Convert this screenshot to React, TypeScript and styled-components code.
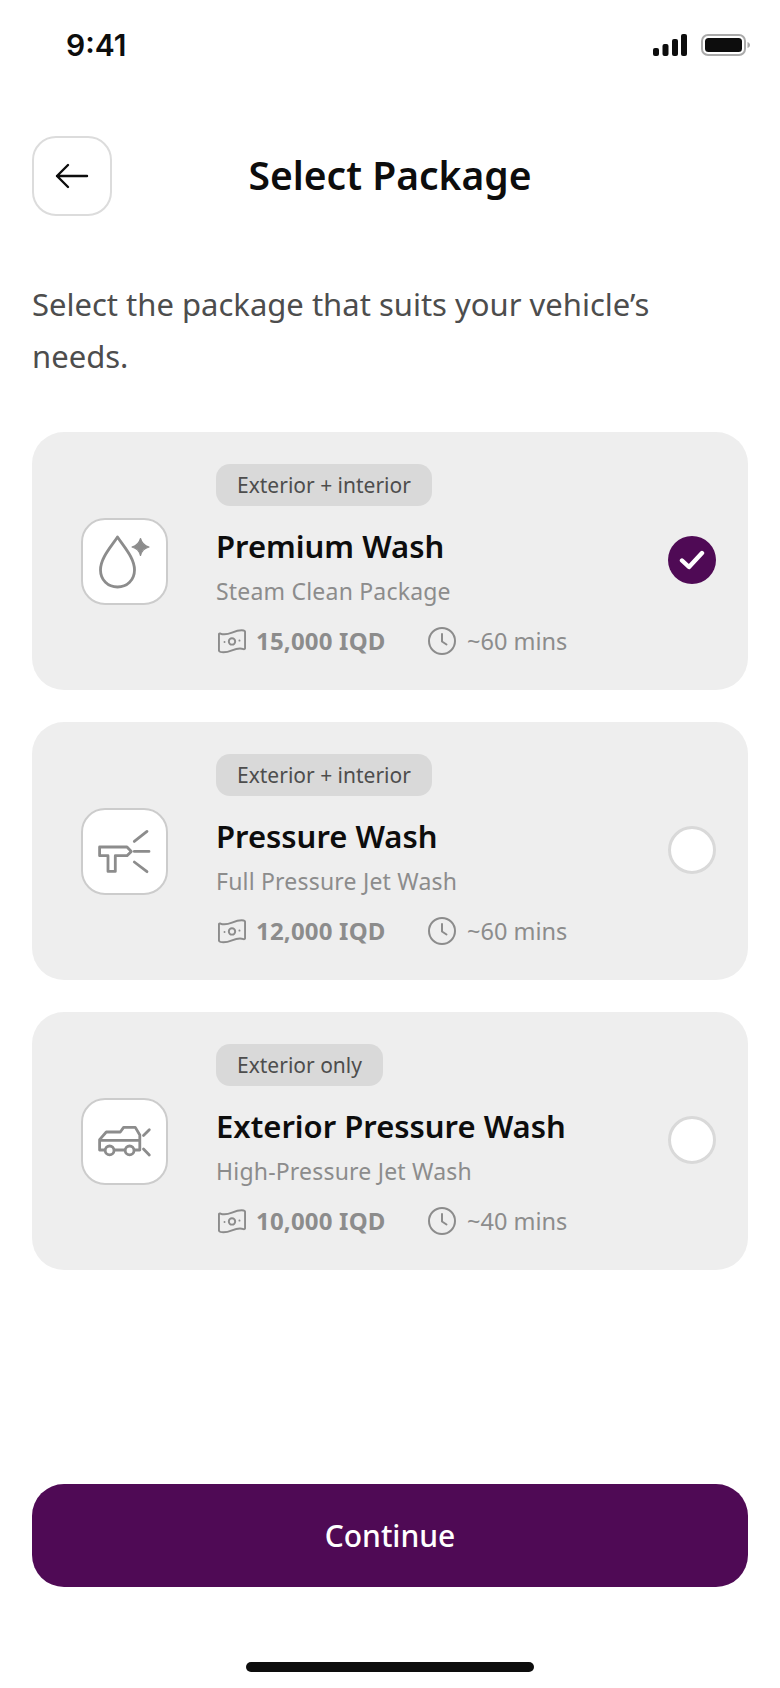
import React from 'react';
import styled, { createGlobalStyle } from 'styled-components';

const GlobalStyle = createGlobalStyle`
  html, body {
    margin: 0;
    padding: 0;
    background: #fff;
  }
  * {
    box-sizing: border-box;
  }
`;

const Page = styled.div`
  width: 780px;
  height: 1688px;
  display: flex;
  flex-direction: column;
  background: #fff;
  font-family: 'Noto Sans', 'Liberation Sans', sans-serif;
  overflow: hidden;
`;

const StatusBar = styled.div`
  height: 90px;
  padding: 0 30px 0 66px;
  display: flex;
  align-items: center;
  justify-content: space-between;
`;

const Time = styled.span`
  font-family: Inter, sans-serif;
  font-size: 30px;
  font-weight: 600;
  color: #0d0d0d;
`;

const StatusIcons = styled.div`
  display: flex;
  align-items: center;
  gap: 14px;
`;

const Header = styled.div`
  margin-top: 46px;
  padding: 0 32px;
  display: flex;
  align-items: center;
`;

const BackButton = styled.button`
  width: 80px;
  height: 80px;
  flex: none;
  display: flex;
  align-items: center;
  justify-content: center;
  padding: 0;
  background: #fff;
  border: 2px solid #dcdcdc;
  border-radius: 24px;
`;

const Title = styled.h1`
  flex: 1;
  margin: 0 80px 2px 0;
  text-align: center;
  font-size: 39px;
  font-weight: 600;
  line-height: 48px;
  color: #0d0d0d;
`;

const Intro = styled.p`
  margin: 62px 0 0;
  padding: 0 32px;
  font-size: 31px;
  line-height: 52px;
  color: #4d4d4d;
`;

const CardList = styled.div`
  margin-top: 50px;
  padding: 0 32px;
  display: flex;
  flex-direction: column;
  gap: 32px;
`;

const Card = styled.div`
  height: 258px;
  padding: 32px 32px 0 49px;
  display: flex;
  align-items: flex-start;
  background: #eeeeee;
  border-radius: 32px;
`;

const IconTile = styled.div`
  width: 87px;
  height: 87px;
  flex: none;
  margin: 54px 48px 0 0;
  background: #fff;
  border: 2px solid #cccccc;
  border-radius: 24px;
`;

const CardBody = styled.div`
  flex: 1;
  min-width: 0;
`;

const Pill = styled.span`
  display: inline-flex;
  align-items: center;
  height: 42px;
  padding: 0 21px;
  background: #d9d9d9;
  border-radius: 14px;
  font-size: 21px;
  color: #4d4d4d;
`;

const CardTitle = styled.div`
  margin-top: 18px;
  font-size: 31px;
  line-height: 44px;
  font-weight: 600;
  color: #0d0d0d;
`;

const CardSubtitle = styled.div`
  margin-top: 6px;
  font-size: 23px;
  line-height: 34px;
  letter-spacing: 0.2px;
  color: #8c8c8c;
`;

const MetaRow = styled.div`
  margin-top: 17px;
  display: flex;
  align-items: center;
  font-size: 24px;
  line-height: 32px;
  color: #8c8c8c;
`;

const Meta = styled.span<{ $width?: number }>`
  display: flex;
  align-items: center;
  gap: 10px;
  width: ${({ $width }) => ($width ? `${$width}px` : 'auto')};
`;

const Price = styled.b`
  font-weight: 700;
  letter-spacing: 0.2px;
`;

const Duration = styled.span`
  font-size: 23.5px;
`;

const MoneySvg = styled.svg`
  margin-left: 2px;
`;

const Radio = styled.div<{ $checked?: boolean }>`
  width: 48px;
  height: 48px;
  flex: none;
  margin-top: 72px;
  display: flex;
  align-items: center;
  justify-content: center;
  border-radius: 50%;
  background: ${({ $checked }) => ($checked ? '#4f0a55' : '#fff')};
  border: ${({ $checked }) => ($checked ? 'none' : '3px solid #d9d9d9')};
`;

const Footer = styled.div`
  margin-top: auto;
  padding: 0 32px;
  display: flex;
  flex-direction: column;
  align-items: center;
`;

const ContinueButton = styled.button`
  width: 100%;
  height: 103px;
  border: none;
  border-radius: 32px;
  background: #4f0a55;
  color: #fff;
  font-family: inherit;
  font-size: 30px;
  font-weight: 500;
`;

const HomeIndicator = styled.div`
  width: 288px;
  height: 10px;
  margin: 75px 0 16px;
  border-radius: 5px;
  background: #0d0d0d;
`;

const stroke = {
  fill: 'none',
  stroke: '#8c8c8c',
  strokeWidth: 2.8,
  strokeLinecap: 'round',
  strokeLinejoin: 'round',
} as const;

function DropIcon() {
  return (
    <svg width="83" height="83" viewBox="0 0 83 83">
      <path
        {...stroke}
        d="M34.5 17C28 27 17.5 38 17.5 50C17.5 60 25 67 34.5 67C44 67 51.5 60 51.5 50C51.5 38 41 27 34.5 17Z"
      />
      <path
        d="M57.5 18.5C58.8 23.5 61 25.7 66 27C61 28.3 58.8 30.5 57.5 35.5C56.2 30.5 54 28.3 49 27C54 25.7 56.2 23.5 57.5 18.5Z"
        fill="#8c8c8c"
        stroke="#8c8c8c"
        strokeWidth="1.2"
        strokeLinejoin="round"
      />
    </svg>
  );
}

function GunIcon() {
  return (
    <svg width="83" height="83" viewBox="0 0 83 83">
      <path {...stroke} d="M16.6 37H44L48.3 41.4L44 45.7H32.3V61.4H25V45.7H16.6V37Z" />
      <path {...stroke} d="M51.3 31.4L64 21.4M51.3 41.4H66M51.3 52L64 61.7" />
    </svg>
  );
}

function CarIcon() {
  return (
    <svg width="83" height="83" viewBox="0 0 83 83">
      <path
        {...stroke}
        d="M21.8 50H16.6V39.7L23.3 32H37.3L40.6 27.4H52.3L56.8 35V50H51.4M41.8 50H31.4M17 40.4H56.5"
      />
      <circle {...stroke} cx="26.6" cy="50.4" r="4.4" />
      <circle {...stroke} cx="46.6" cy="50.4" r="4.4" />
      <path {...stroke} d="M60.5 35.5L66.3 29.7M60.5 49L66.3 55" />
    </svg>
  );
}

function MoneyIcon() {
  return (
    <MoneySvg width="28" height="26" viewBox="0 0 30 27" {...stroke} strokeWidth={2.1}>
      <path d="M2.5 5.5C6 7 10 6.5 15 4.5C20 2.5 24 1.5 27.5 2.2C28.4 2.4 29 3 29 3.9V21C29 21.9 28.2 22.5 27.3 22.2C24 21 20 21.5 15 23.5C10 25.5 6 26 2.6 25.2C1.6 24.9 1 24.3 1 23.4V6.4C1 5.5 1.7 5.2 2.5 5.5Z" />
      <circle cx="15" cy="14" r="3.4" />
      <path d="M7 14.5V14.6M23 13V13.1" />
    </MoneySvg>
  );
}

function ClockIcon() {
  return (
    <svg width="30" height="30" viewBox="0 0 30 30" {...stroke} strokeWidth={2}>
      <circle cx="15" cy="15" r="13" />
      <path d="M15 8V15.5L19.5 18.5" />
    </svg>
  );
}

const packages = [
  {
    tag: 'Exterior + interior',
    title: 'Premium Wash',
    subtitle: 'Steam Clean Package',
    price: '15,000 IQD',
    time: '~60 mins',
    icon: <DropIcon />,
    checked: true,
  },
  {
    tag: 'Exterior + interior',
    title: 'Pressure Wash',
    subtitle: 'Full Pressure Jet Wash',
    price: '12,000 IQD',
    time: '~60 mins',
    icon: <GunIcon />,
  },
  {
    tag: 'Exterior only',
    title: 'Exterior Pressure Wash',
    subtitle: 'High-Pressure Jet Wash',
    price: '10,000 IQD',
    time: '~40 mins',
    icon: <CarIcon />,
  },
];

export default function App() {
  return (
    <Page>
      <GlobalStyle />
      <StatusBar>
        <Time>9:41</Time>
        <StatusIcons>
          <svg width="34" height="22" viewBox="0 0 34 22" fill="#0d0d0d">
            <rect x="0" y="14" width="6" height="8" rx="2" />
            <rect x="9.5" y="10" width="6" height="12" rx="2" />
            <rect x="19" y="5" width="6" height="17" rx="2" />
            <rect x="28" y="0" width="6" height="22" rx="2" />
          </svg>
          <svg width="49" height="22" viewBox="0 0 49 22">
            <rect x="1" y="1" width="43" height="20" rx="6" fill="none" stroke="#aaaaaa" strokeWidth="2" />
            <rect x="4" y="4" width="37" height="14" rx="3.5" fill="#0d0d0d" />
            <path d="M46.5 8V14C48 13.5 49 12.5 49 11C49 9.5 48 8.5 46.5 8Z" fill="#aaaaaa" />
          </svg>
        </StatusIcons>
      </StatusBar>

      <Header>
        <BackButton aria-label="Back">
          <svg width="36" height="28" viewBox="0 0 36 28" fill="none" stroke="#0d0d0d" strokeWidth="2.4">
            <path d="M33 14H3M14 3L3 14L14 25" strokeLinecap="round" strokeLinejoin="round" />
          </svg>
        </BackButton>
        <Title>Select Package</Title>
      </Header>

      <Intro>Select the package that suits your vehicle’s needs.</Intro>

      <CardList>
        {packages.map((item) => (
          <Card key={item.title}>
            <IconTile>{item.icon}</IconTile>
            <CardBody>
              <Pill>{item.tag}</Pill>
              <CardTitle>{item.title}</CardTitle>
              <CardSubtitle>{item.subtitle}</CardSubtitle>
              <MetaRow>
                <Meta $width={211}>
                  <MoneyIcon />
                  <Price>{item.price}</Price>
                </Meta>
                <Meta>
                  <ClockIcon />
                  <Duration>{item.time}</Duration>
                </Meta>
              </MetaRow>
            </CardBody>
            <Radio $checked={item.checked}>
              {item.checked && (
                <svg width="26" height="22" viewBox="0 0 26 22" fill="none" stroke="#fff" strokeWidth="4.4">
                  <path d="M3 11.5L10 18L23 4" strokeLinecap="round" strokeLinejoin="round" />
                </svg>
              )}
            </Radio>
          </Card>
        ))}
      </CardList>

      <Footer>
        <ContinueButton>Continue</ContinueButton>
        <HomeIndicator />
      </Footer>
    </Page>
  );
}
